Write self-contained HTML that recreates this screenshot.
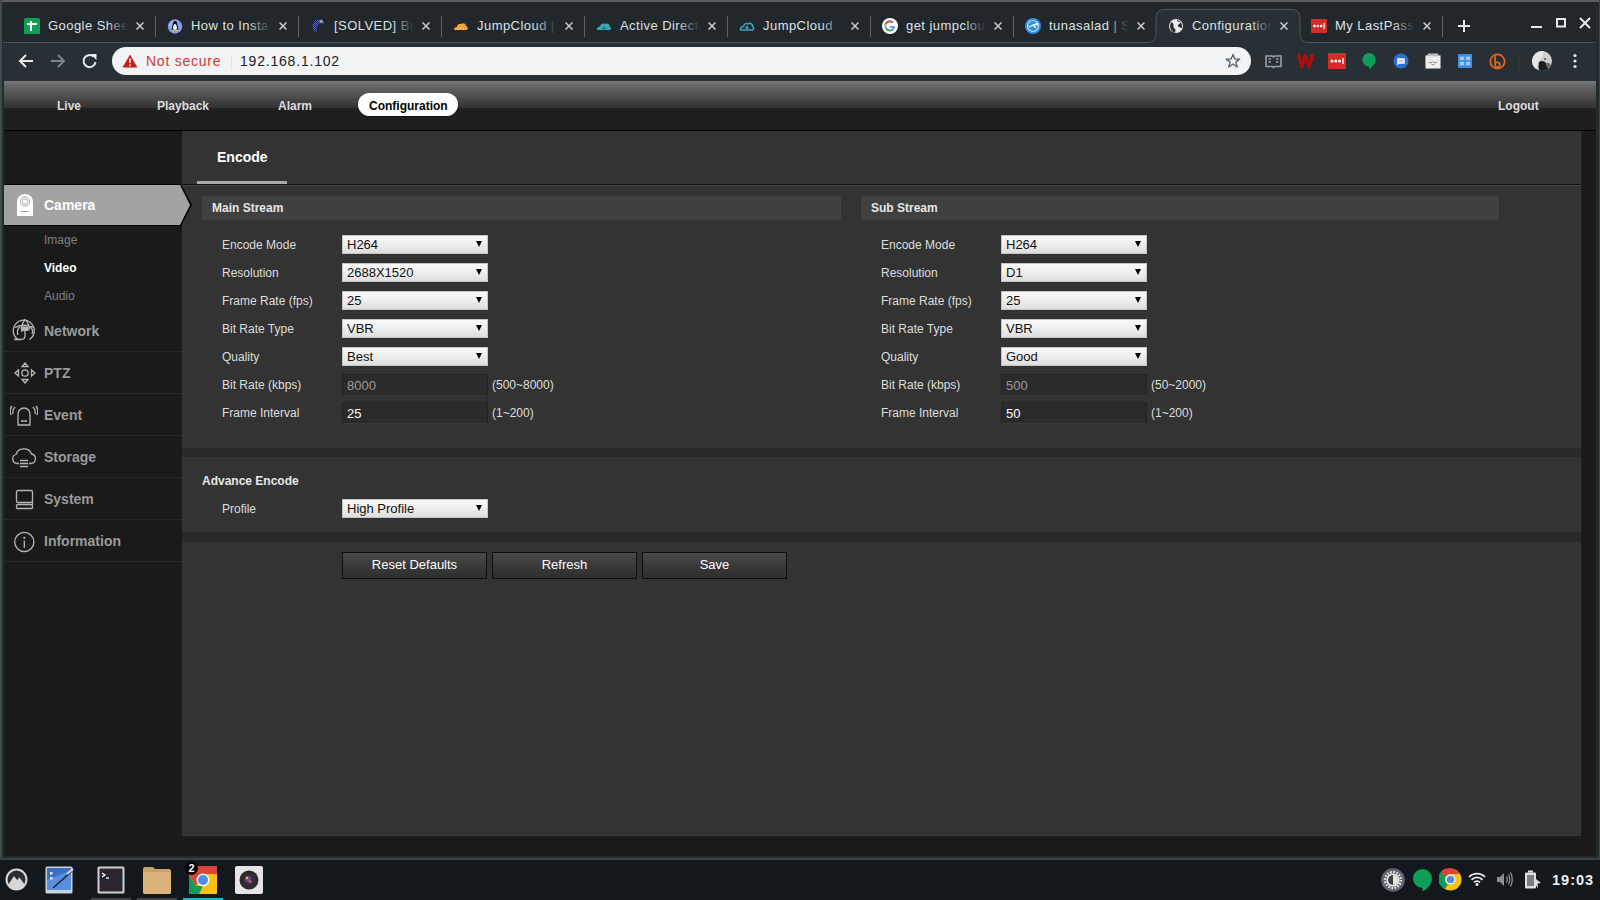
<!DOCTYPE html>
<html><head><meta charset="utf-8">
<style>
*{box-sizing:border-box;margin:0;padding:0}
html,body{width:1600px;height:900px;overflow:hidden;background:#13181c;font-family:"Liberation Sans",sans-serif}
.abs{position:absolute}
#win{position:absolute;left:0;top:0;width:1600px;height:860px;background:#232b2e}
#strip{position:absolute;left:3px;top:2px;width:1593px;height:40px;background:#21272b}
#toolbar{position:absolute;left:3px;top:43px;width:1593px;height:38px;background:#283035}
.sepline{position:absolute;top:42px;height:1px;background:#4a5357}
.tab{position:absolute;top:2px;height:40px;width:143px;color:#dde0e3;font-size:13px}
.tab .fav{position:absolute;left:12px;top:16px;width:16px;height:16px}
.tab .tt{position:absolute;left:36px;top:15px;width:80px;overflow:hidden;white-space:nowrap;line-height:18px;letter-spacing:0.45px}
.tab .tt:after{content:"";position:absolute;right:0;top:0;width:22px;height:18px;background:linear-gradient(90deg,rgba(33,39,43,0),#21272b)}
.tab.act .tt:after{background:linear-gradient(90deg,rgba(40,48,53,0),#283035)}
.tab .x{position:absolute;left:124px;top:20px;width:8px;height:8px}
.tab .sep{position:absolute;left:143px;top:14px;width:1px;height:21px;background:#5d6468}
#page{position:absolute;left:4px;top:81px;width:1592px;height:775px;background:#1b1b1b;overflow:hidden}
#nav{position:absolute;left:0;top:0;width:1592px;height:50px;background:linear-gradient(#787878 0px,#747474 2px,#6a6a6a 3px,#646464 5px,#5a5a5a 10px,#4c4c4c 16px,#3c3c3c 22px,#333 27px,#1f1f1f 27px,#222 29px,#1f1f1f 30px,#1f1f1f 49px,#000 49px)}
.navi{position:absolute;top:18px;font-size:12px;font-weight:bold;color:#ddd;line-height:14px}
#side{position:absolute;z-index:2;left:0;top:50px;width:178px;height:725px;background:#1a1a1a}
#panel{position:absolute;left:178px;top:50px;width:1399px;height:705px;background:#333;box-shadow:inset -1px -1px 0 #393939}
.lbl{position:absolute;font-size:12px;color:#ddd;line-height:14px}
.sel{position:absolute;width:146px;height:19px;background:linear-gradient(#fafafa,#ececec 55%,#dedede);border:1px solid #c4c4c4;font-size:13px;color:#111;line-height:17px;padding-left:4px}
.sel:after{content:"";position:absolute;right:5px;top:5px;border-left:3.5px solid transparent;border-right:3.5px solid transparent;border-top:6px solid #000}
.inp{position:absolute;width:146px;height:22px;background:#2b2b2b;border:1px solid #232323;border-bottom-color:#3a3a3a;font-size:13px;color:#fff;line-height:21px;padding-left:4px}
.btn{position:absolute;width:145px;height:27px;background:linear-gradient(#4a4a4a,#3a3a3a 50%,#2e2e2e);border:1px solid #0e0e0e;font-size:13px;color:#fff;text-align:center;line-height:24px}
.sb{position:absolute;left:0;width:178px;height:42px;border-bottom:1px solid #282828}
.sb span{position:absolute;left:40px;top:13px;font-size:14px;font-weight:bold;color:#9a9a9a;line-height:16px}
.sb svg{position:absolute}
.sub{position:absolute;left:40px;font-size:12px;color:#7f7f7f;line-height:14px}
#taskbar{position:absolute;left:0;top:860px;width:1600px;height:40px;background:#13181c}
</style></head>
<body>
<div id="win">
<div class="abs" style="left:0;top:0;width:1600px;height:2px;background:#585e62"></div>
<div class="abs" style="left:0;top:0;width:2px;height:860px;background:#414b4e"></div>
<div class="abs" style="left:1599px;top:0;width:1px;height:860px;background:#3a4447"></div>
<div class="abs" style="left:0;top:858px;width:1600px;height:2px;background:#3a4246"></div>
<div id="strip"></div><div id="toolbar"></div>
<div class="sepline" style="left:3px;width:1145px"></div>
<div class="sepline" style="left:1308px;width:288px"></div>
<svg class="abs" style="left:1146px;top:9px" width="164" height="34" viewBox="0 0 164 34"><path d="M1 33.5 Q10 33.5 10 25 V9 Q10 1 18 1 H146 Q154 1 154 9 V25 Q154 33.5 163 33.5 V34 H1Z" fill="#283035"/><path d="M1 33.5 Q10 33.5 10 25 V9 Q10 0.5 18 0.5 H146 Q154 0.5 154 9 V25 Q154 33.5 163 33.5" fill="none" stroke="#4d565a" stroke-width="1"/></svg>
<div class="tab" style="left:12px"><svg class="fav" viewBox="0 0 16 16"><rect x="0" y="0" width="16" height="16" rx="1.5" fill="#0f9d58"/><rect x="3" y="5" width="10" height="2" fill="#fff"/><rect x="6" y="3" width="2" height="10" fill="#fff"/></svg><div class="tt">Google Sheets</div><svg class="x" viewBox="0 0 8 8"><path d="M0.5 0.5L7.5 7.5M7.5 0.5L0.5 7.5" stroke="#c9ccd0" stroke-width="1.5"/></svg><div class="sep"></div></div>
<div class="tab" style="left:155px"><svg class="fav" viewBox="0 0 16 16"><circle cx="8" cy="8.5" r="7.2" fill="#7f9ef0"/><circle cx="6.5" cy="7" r="4" fill="#a8c0ff" opacity="0.6"/><path d="M8 3 C6.3 3 5.8 5 5.6 7 C5 9 4.3 10.5 4.8 12 H11.2 C11.7 10.5 11 9 10.4 7 C10.2 5 9.7 3 8 3Z" fill="#111"/><path d="M8 6 C6.8 6 6.3 8 6 10 C5.8 11 6.5 12 8 12 C9.5 12 10.2 11 10 10 C9.7 8 9.2 6 8 6Z" fill="#f4f4f4"/><path d="M4.3 12.5 Q5 10.8 6.8 12 Q8 13.2 6.5 13.3Z M11.7 12.5 Q11 10.8 9.2 12 Q8 13.2 9.5 13.3Z" fill="#d8d020"/></svg><div class="tt">How to Install</div><svg class="x" viewBox="0 0 8 8"><path d="M0.5 0.5L7.5 7.5M7.5 0.5L0.5 7.5" stroke="#c9ccd0" stroke-width="1.5"/></svg><div class="sep"></div></div>
<div class="tab" style="left:298px"><svg class="fav" viewBox="0 0 16 16"><defs><pattern id="ck" width="2" height="2" patternUnits="userSpaceOnUse"><rect width="2" height="2" fill="#5a5fc8"/><rect width="1" height="1" fill="#1c1f70"/><rect x="1" y="1" width="1" height="1" fill="#1c1f70"/></pattern></defs><path d="M6 2 C9 1 12 1.5 13 3 L15 5 L11 5.5 C9 5 7 7 7 10 L6.5 15 C4 13.5 2 11 2.5 7.5 C3 5 4 3 6 2Z" fill="url(#ck)"/><path d="M9 2.5 L12 1.5 L13.5 4.5 L10.5 5Z" fill="#9a9ec0"/></svg><div class="tt">[SOLVED] Bro</div><svg class="x" viewBox="0 0 8 8"><path d="M0.5 0.5L7.5 7.5M7.5 0.5L0.5 7.5" stroke="#c9ccd0" stroke-width="1.5"/></svg><div class="sep"></div></div>
<div class="tab" style="left:441px"><svg class="fav" viewBox="0 0 16 16"><path d="M1 12 C1 10 2 9 4 9 C4 7 6 5 8.5 6 C10 4.5 13 5.5 13 8 C15 8 15.5 12 13.5 12 Z" fill="#f5a13a"/><path d="M4 11h1M7 10h1M10 11h1" stroke="#fff" stroke-width="1"/></svg><div class="tt">JumpCloud | Di</div><svg class="x" viewBox="0 0 8 8"><path d="M0.5 0.5L7.5 7.5M7.5 0.5L0.5 7.5" stroke="#c9ccd0" stroke-width="1.5"/></svg><div class="sep"></div></div>
<div class="tab" style="left:584px"><svg class="fav" viewBox="0 0 16 16"><path d="M1 12 C1 10 2 8.5 4 8.5 C4.5 6 7 5 9 6 C11 4.5 14 6 13.5 8.5 C15.5 9 15.5 12 13.5 12 Z" fill="#3aa7b8"/><path d="M8 12 V9 M6.5 10.5 L8 9 L9.5 10.5" stroke="#1e5d66" stroke-width="1" fill="none"/></svg><div class="tt">Active Directo</div><svg class="x" viewBox="0 0 8 8"><path d="M0.5 0.5L7.5 7.5M7.5 0.5L0.5 7.5" stroke="#c9ccd0" stroke-width="1.5"/></svg><div class="sep"></div></div>
<div class="tab" style="left:727px"><svg class="fav" viewBox="0 0 16 16"><path d="M1.5 12 C1.5 10 2.5 8.5 4.5 8.5 C5 6 7 5 9 6 C11 4.5 14 6 13.5 8.5 C15 9 15 12 13.5 12 Z" fill="none" stroke="#3aa7b8" stroke-width="1.5"/><path d="M8 12 V8.5 M6.5 10 L8 8.5 L9.5 10" stroke="#3aa7b8" stroke-width="1.2" fill="none"/></svg><div class="tt">JumpCloud</div><svg class="x" viewBox="0 0 8 8"><path d="M0.5 0.5L7.5 7.5M7.5 0.5L0.5 7.5" stroke="#c9ccd0" stroke-width="1.5"/></svg><div class="sep"></div></div>
<div class="tab" style="left:870px"><svg class="fav" viewBox="0 0 16 16"><circle cx="8" cy="8" r="8" fill="#fff"/><path d="M12.8 8.2 H8 V9.8 H11 C10.6 11 9.5 11.8 8 11.8 A3.8 3.8 0 1 1 10.5 5.1 L11.6 4 A5.4 5.4 0 1 0 13 8.8 Z" fill="#4285f4"/><path d="M3.2 5.6 A5.4 5.4 0 0 1 11.6 4 L10.5 5.1 A3.8 3.8 0 0 0 4.6 6.5 Z" fill="#ea4335"/><path d="M3.2 5.6 L4.6 6.5 A3.8 3.8 0 0 0 4.6 9.5 L3.2 10.5 A5.4 5.4 0 0 1 3.2 5.6Z" fill="#fbbc05"/><path d="M3.2 10.5 L4.6 9.5 A3.8 3.8 0 0 0 10 11.2 L11.2 12.3 A5.4 5.4 0 0 1 3.2 10.5Z" fill="#34a853"/></svg><div class="tt">get jumpcloud</div><svg class="x" viewBox="0 0 8 8"><path d="M0.5 0.5L7.5 7.5M7.5 0.5L0.5 7.5" stroke="#c9ccd0" stroke-width="1.5"/></svg><div class="sep"></div></div>
<div class="tab" style="left:1013px"><svg class="fav" viewBox="0 0 16 16"><circle cx="8" cy="8" r="8" fill="#2f8fe0"/><circle cx="8" cy="8" r="5.5" fill="none" stroke="#bfe0ff" stroke-width="1.2"/><path d="M4 9 L8 7 L12 6 M8 7 L11 10" stroke="#fff" stroke-width="1.3"/><circle cx="12" cy="6" r="1.3" fill="#fff"/></svg><div class="tt">tunasalad | Sp</div><svg class="x" viewBox="0 0 8 8"><path d="M0.5 0.5L7.5 7.5M7.5 0.5L0.5 7.5" stroke="#c9ccd0" stroke-width="1.5"/></svg></div>
<div class="tab act" style="left:1156px"><svg class="fav" viewBox="0 0 16 16"><circle cx="8" cy="8" r="7" fill="#e8eaed"/><path d="M3 4 C5 5 6 6 5.5 8 C5 10 7 10 7.5 12 L7 15 C4 14 2 11 2 8 Z M9 1.5 C9 3 10 4 12 4 C13 5 11 6 10 7 C9 8 11 9 12 9.5 L14 10 C14.5 8 14 4 9 1.5Z" fill="#283035"/></svg><div class="tt">Configuration</div><svg class="x" viewBox="0 0 8 8"><path d="M0.5 0.5L7.5 7.5M7.5 0.5L0.5 7.5" stroke="#c9ccd0" stroke-width="1.5"/></svg></div>
<div class="tab" style="left:1299px"><svg class="fav" viewBox="0 0 16 16"><rect x="0" y="1" width="16" height="14" rx="1" fill="#d32d27"/><circle cx="3.5" cy="8" r="1.3" fill="#fff"/><circle cx="6.8" cy="8" r="1.3" fill="#fff"/><circle cx="10.1" cy="8" r="1.3" fill="#fff"/><rect x="12.5" y="5" width="1.2" height="6" fill="#fff"/></svg><div class="tt">My LastPass Va</div><svg class="x" viewBox="0 0 8 8"><path d="M0.5 0.5L7.5 7.5M7.5 0.5L0.5 7.5" stroke="#c9ccd0" stroke-width="1.5"/></svg><div class="sep"></div></div>
<svg class="abs" style="left:1457px;top:19px" width="14" height="14" viewBox="0 0 14 14"><path d="M7 1V13M1 7H13" stroke="#e8eaed" stroke-width="2"/></svg>
<svg class="abs" style="left:1530px;top:20px" width="14" height="14" viewBox="0 0 14 14"><path d="M1 7H12" stroke="#e8eaed" stroke-width="2"/></svg>
<svg class="abs" style="left:1556px;top:18px" width="11" height="10" viewBox="0 0 11 10"><rect x="1" y="1" width="8" height="7.5" fill="none" stroke="#e8eaed" stroke-width="2"/></svg>
<svg class="abs" style="left:1579px;top:17px" width="12" height="12" viewBox="0 0 12 12"><path d="M1 1L11 11M11 1L1 11" stroke="#e8eaed" stroke-width="2"/></svg>
<svg class="abs" style="left:17px;top:53px" width="18" height="16" viewBox="0 0 18 16"><path d="M16 8H3M9 2L3 8L9 14" stroke="#e8eaed" stroke-width="2" fill="none"/></svg>
<svg class="abs" style="left:49px;top:53px" width="18" height="16" viewBox="0 0 18 16"><path d="M2 8H15M9 2L15 8L9 14" stroke="#7f8589" stroke-width="2" fill="none"/></svg>
<svg class="abs" style="left:81px;top:53px" width="18" height="16" viewBox="0 0 18 16"><path d="M14.5 9 A6 6 0 1 1 12.5 3.6" stroke="#e8eaed" stroke-width="2" fill="none"/><path d="M9.5 1 H15.5 V7 Z" fill="#e8eaed"/></svg>
<div class="abs" style="left:112px;top:47px;width:1139px;height:28px;border-radius:14px;background:#f1f3f4"></div>
<svg class="abs" style="left:122px;top:54px" width="16" height="14" viewBox="0 0 16 14"><path d="M8 0.5L15.5 13.5H0.5Z" fill="#c5221f"/><path d="M8 4.5V9M8 10.5V12" stroke="#fff" stroke-width="1.6"/></svg>
<div class="abs" style="left:146px;top:53px;font-size:14px;letter-spacing:0.75px;color:#cf3a35;line-height:16px">Not secure</div>
<div class="abs" style="left:231px;top:54px;width:1px;height:15px;background:#e4e6e8"></div>
<div class="abs" style="left:240px;top:53px;font-size:14px;letter-spacing:0.8px;color:#202124;line-height:16px">192.168.1.102</div>
<svg class="abs" style="left:1225px;top:53px" width="16" height="16" viewBox="0 0 16 16"><path d="M8 1.5L9.9 6.1H14.7L10.8 9.1L12.3 14L8 11L3.7 14L5.2 9.1L1.3 6.1H6.1Z" fill="none" stroke="#5f6368" stroke-width="1.4" stroke-linejoin="round"/></svg>
<svg class="abs" style="left:1265px;top:55px" width="17" height="14" viewBox="0 0 17 14"><path d="M1 1H7.5L8.5 2L9.5 1H16V11.5H9.5L8.5 12.5L7.5 11.5H1Z" fill="none" stroke="#9aa0a4" stroke-width="1.6"/><path d="M3.5 4H6M3.5 7H6M11 4H13.5M11 7H13.5" stroke="#9aa0a4" stroke-width="1.4"/></svg>
<svg class="abs" style="left:1297px;top:54px" width="17" height="14" viewBox="0 0 17 14"><path d="M0 0H3.5L5 8L7 0H10L12 8L13.5 0H17L13.5 14H10.5L8.5 6L6.5 14H3.5Z" fill="#b00e0e"/><rect x="13" y="5" width="4" height="2" fill="#b00e0e"/></svg>
<svg class="abs" style="left:1328px;top:53px" width="18" height="16" viewBox="0 0 18 16"><rect x="0" y="0" width="18" height="16" rx="1" fill="#d32d27"/><circle cx="4" cy="8" r="1.5" fill="#fff"/><circle cx="7.8" cy="8" r="1.5" fill="#fff"/><circle cx="11.6" cy="8" r="1.5" fill="#fff"/><rect x="14.4" y="5" width="1.4" height="6" fill="#fff"/></svg>
<svg class="abs" style="left:1361px;top:52px" width="16" height="18" viewBox="0 0 17 20"><path d="M8.5 1A7.5 7.5 0 0 0 1 8.5A7.5 7.5 0 0 0 8.5 16V19C13 16 16 12 16 8.5A7.5 7.5 0 0 0 8.5 1Z" fill="#0f9d58"/></svg>
<svg class="abs" style="left:1393px;top:53px" width="16" height="16" viewBox="0 0 17 17"><circle cx="8.5" cy="8.5" r="8" fill="#2a6fd6"/><path d="M4.5 5.5H12.5V11.5H6.5L4.5 13Z" fill="#fff"/><rect x="6" y="7" width="5" height="3" fill="#c8c0f0"/></svg>
<svg class="abs" style="left:1425px;top:52px" width="16" height="18" viewBox="0 0 17 18"><rect x="0.5" y="3" width="16" height="14" fill="#eee"/><rect x="3" y="1" width="11" height="3" fill="#bbb"/><path d="M4 10 L6 11 L8 10 M9 10 L11 11 L13 10 M7 13 H10" stroke="#666" stroke-width="0.9" fill="none"/></svg>
<svg class="abs" style="left:1458px;top:54px" width="14" height="14" viewBox="0 0 16 16"><rect x="0" y="0" width="16" height="16" rx="1" fill="#3b8de0"/><rect x="2" y="3" width="12" height="4" fill="#9ccaf5"/><rect x="2" y="9" width="12" height="4" fill="#9ccaf5"/><rect x="7" y="3" width="2" height="10" fill="#3b8de0"/></svg>
<svg class="abs" style="left:1489px;top:53px" width="17" height="17" viewBox="0 0 18 18"><circle cx="9" cy="9" r="7.5" fill="none" stroke="#e8661c" stroke-width="1.8"/><path d="M6.5 3.5V12.5A2.5 2.5 0 1 0 9 10H6.5" stroke="#e8661c" stroke-width="1.8" fill="none"/></svg>
<div class="abs" style="left:1519px;top:52px;width:1px;height:18px;background:#2f373b"></div>
<svg class="abs" style="left:1532px;top:51px" width="20" height="20" viewBox="0 0 20 20"><defs><clipPath id="av"><circle cx="10" cy="10" r="10"/></clipPath></defs><g clip-path="url(#av)"><rect width="20" height="20" fill="#cfcfcf"/><path d="M0 0H12 L10 6 Q6 9 4 20 H0Z" fill="#e6e6e6"/><path d="M7 11 Q10 9 13 11 L15 14 Q17 17 15 20 H7 Q6 15 7 11Z" fill="#1e1e1e"/><path d="M14 12 Q17 11 19 14 V17 Q16 17 14 15Z" fill="#6a6a6a"/><circle cx="13" cy="8" r="0.9" fill="#444"/></g></svg>
<svg class="abs" style="left:1572px;top:53px" width="6" height="16" viewBox="0 0 6 16"><circle cx="3" cy="2.5" r="1.6" fill="#e8eaed"/><circle cx="3" cy="8" r="1.6" fill="#e8eaed"/><circle cx="3" cy="13.5" r="1.6" fill="#e8eaed"/></svg>
<div id="page">
<div id="nav">
<div class="navi" style="left:53px">Live</div>
<div class="navi" style="left:153px">Playback</div>
<div class="navi" style="left:274px">Alarm</div>
<div class="abs" style="left:354px;top:12px;width:100px;height:23px;border-radius:12px;background:#fff;box-shadow:0 1px 1px rgba(0,0,0,0.5)"></div>
<div class="navi" style="left:365px;color:#000">Configuration</div>
<div class="navi" style="left:1494px">Logout</div>
</div>
<div id="side">
<div class="abs" style="left:0;top:53px;width:188px;height:42px;background:#000;clip-path:polygon(0 0,177px 0,188px 21px,177px 42px,0 42px)"></div>
<div class="abs" style="left:0;top:54px;width:186px;height:40px;background:#a3a3a3;clip-path:polygon(0 0,176px 0,186px 20px,176px 40px,0 40px)"></div>
<svg class="abs" style="left:13px;top:63px" width="16" height="22" viewBox="0 0 16 22"><path d="M0 8 A8 8 0 0 1 16 8 V22 H0 Z" fill="#fff"/><circle cx="8" cy="7.5" r="4.5" fill="none" stroke="#a0a0a0" stroke-width="1"/><circle cx="8" cy="7.5" r="2.5" fill="none" stroke="#a0a0a0" stroke-width="0.8"/><line x1="4" y1="17.5" x2="12" y2="17.5" stroke="#a0a0a0" stroke-width="1"/></svg>
<div class="abs" style="left:40px;top:66px;font-size:14px;font-weight:bold;color:#fff;line-height:16px">Camera</div>
<div class="sub" style="top:102px">Image</div>
<div class="sub" style="top:130px;color:#fff;font-weight:bold">Video</div>
<div class="sub" style="top:158px">Audio</div>
<div class="sb" style="top:179px"><svg style="left:8px;top:8px" width="25" height="25" viewBox="0 0 25 25" fill="none" stroke="#b5b5b5" stroke-width="1.3"><path d="M6 21.5 A10.5 10.5 0 1 1 17.5 21.5"/><path d="M13 1.5 Q8 8 10 14M13 1.5 Q18 6 17 12M3 9.5 Q12 5 22 9.5M6 17 Q4 12 8 9M20 16 Q22 12 18 9"/><rect x="9.5" y="8.5" width="7" height="4.5" fill="#b5b5b5" stroke="none"/><path d="M13 13V17.5 Q13 21.5 9 21.5H2"/></svg><span>Network</span></div>
<div class="sb" style="top:221px"><svg style="left:10px;top:10px" width="22" height="22" viewBox="0 0 22 22" fill="none" stroke="#b5b5b5" stroke-width="1.3"><path d="M11 1L14 4.5H8Z M11 21L14 17.5H8Z M1 11L4.5 8V14Z M21 11L17.5 8V14Z"/><circle cx="11" cy="11" r="3.2"/><rect x="6.5" y="6.5" width="9" height="9" stroke="none"/></svg><span>PTZ</span></div>
<div class="sb" style="top:263px"><svg style="left:6px;top:9px" width="28" height="24" viewBox="0 0 28 24" fill="none" stroke="#b5b5b5" stroke-width="1.3"><path d="M8 22V11 A6 6 0 0 1 20 11 V22Z M11 18H17"/><path d="M5 4 Q2 7 3 11M2 3 Q-1 7 1 12M23 4 Q26 7 25 11M26 3 Q29 7 27 12"/></svg><span>Event</span></div>
<div class="sb" style="top:305px"><svg style="left:8px;top:10px" width="24" height="22" viewBox="0 0 24 22" fill="none" stroke="#b5b5b5" stroke-width="1.3"><path d="M7 17.5 H5 A4.6 4.6 0 0 1 4 8.5 A8 7 0 0 1 19.5 8 A4.8 4.8 0 0 1 19 17.5 H17"/><path d="M8 14.5H16M8 17.5H16M8 20.5H16"/></svg><span>Storage</span></div>
<div class="sb" style="top:347px"><svg style="left:11px;top:11px" width="22" height="22" viewBox="0 0 22 22" fill="none" stroke="#b5b5b5" stroke-width="1.3"><rect x="1.5" y="1.5" width="16" height="12" rx="1.5"/><path d="M17.5 12 V15.5 M2.5 15.5 H16 Q17.5 15.5 17.5 17 V18.5 Q17.5 19.5 16.5 19.5 H2.5 Q1.5 19.5 1.5 18.5 V16.5 Q1.5 15.5 2.5 15.5Z"/></svg><span>System</span></div>
<div class="sb" style="top:389px"><svg style="left:9px;top:11px" width="22" height="22" viewBox="0 0 22 22" fill="none" stroke="#b5b5b5" stroke-width="1.3"><circle cx="11.3" cy="11" r="9.6"/><path d="M11.3 9.5V17"/><circle cx="11.3" cy="6.8" r="0.5" fill="#b5b5b5"/></svg><span>Information</span></div>
</div>
<div id="panel">
<div class="abs" style="left:35px;top:18px;font-size:14px;font-weight:bold;color:#fff;line-height:16px">Encode</div>
<div class="abs" style="left:15px;top:50px;width:90px;height:3px;background:#aaa"></div>
<div class="abs" style="left:0;top:53px;width:1399px;height:1px;background:#111"></div>
<div class="abs" style="left:0;top:54px;width:1399px;height:1px;background:#474747"></div>
<div class="abs" style="left:20px;top:65px;width:639px;height:24px;background:#404040"></div>
<div class="abs" style="left:30px;top:70px;font-size:12px;font-weight:bold;color:#e6e6e6;line-height:14px">Main Stream</div>
<div class="abs" style="left:679px;top:65px;width:638px;height:24px;background:#404040"></div>
<div class="abs" style="left:689px;top:70px;font-size:12px;font-weight:bold;color:#e6e6e6;line-height:14px">Sub Stream</div>
<div class="lbl" style="left:40px;top:107px">Encode Mode</div>
<div class="sel" style="left:160px;top:104px">H264</div>
<div class="lbl" style="left:40px;top:135px">Resolution</div>
<div class="sel" style="left:160px;top:132px">2688X1520</div>
<div class="lbl" style="left:40px;top:163px">Frame Rate (fps)</div>
<div class="sel" style="left:160px;top:160px">25</div>
<div class="lbl" style="left:40px;top:191px">Bit Rate Type</div>
<div class="sel" style="left:160px;top:188px">VBR</div>
<div class="lbl" style="left:40px;top:219px">Quality</div>
<div class="sel" style="left:160px;top:216px">Best</div>
<div class="lbl" style="left:40px;top:247px">Bit Rate (kbps)</div>
<div class="inp" style="left:160px;top:243px;color:#999">8000</div>
<div class="lbl" style="left:310px;top:247px">(500~8000)</div>
<div class="lbl" style="left:40px;top:275px">Frame Interval</div>
<div class="inp" style="left:160px;top:271px">25</div>
<div class="lbl" style="left:310px;top:275px">(1~200)</div>
<div class="lbl" style="left:699px;top:107px">Encode Mode</div>
<div class="sel" style="left:819px;top:104px">H264</div>
<div class="lbl" style="left:699px;top:135px">Resolution</div>
<div class="sel" style="left:819px;top:132px">D1</div>
<div class="lbl" style="left:699px;top:163px">Frame Rate (fps)</div>
<div class="sel" style="left:819px;top:160px">25</div>
<div class="lbl" style="left:699px;top:191px">Bit Rate Type</div>
<div class="sel" style="left:819px;top:188px">VBR</div>
<div class="lbl" style="left:699px;top:219px">Quality</div>
<div class="sel" style="left:819px;top:216px">Good</div>
<div class="lbl" style="left:699px;top:247px">Bit Rate (kbps)</div>
<div class="inp" style="left:819px;top:243px;color:#999">500</div>
<div class="lbl" style="left:969px;top:247px">(50~2000)</div>
<div class="lbl" style="left:699px;top:275px">Frame Interval</div>
<div class="inp" style="left:819px;top:271px">50</div>
<div class="lbl" style="left:969px;top:275px">(1~200)</div>
<div class="abs" style="left:0;top:317px;width:1399px;height:9px;background:#292929"></div>
<div class="abs" style="left:20px;top:343px;font-size:12px;font-weight:bold;color:#e6e6e6;line-height:14px">Advance Encode</div>
<div class="lbl" style="left:40px;top:371px">Profile</div>
<div class="sel" style="left:160px;top:368px">High Profile</div>
<div class="abs" style="left:0;top:401px;width:1399px;height:10px;background:#292929"></div>
<div class="btn" style="left:160px;top:421px">Reset Defaults</div>
<div class="btn" style="left:310px;top:421px">Refresh</div>
<div class="btn" style="left:460px;top:421px">Save</div>
</div>
</div>
</div>
<div id="taskbar"></div>
<svg class="abs" style="left:5px;top:868px" width="23" height="23" viewBox="0 0 23 23"><circle cx="11.5" cy="11.5" r="10" fill="#2a2f33" stroke="#d8d8d8" stroke-width="2"/><path d="M3 17 L9 8 L12 12 L14.5 9.5 L20 17 A10 10 0 0 1 3 17Z" fill="#d8d8d8"/></svg>
<svg class="abs" style="left:45px;top:866px" width="29" height="28" viewBox="0 0 29 28"><rect x="0.5" y="0.5" width="27" height="27" rx="1.5" fill="#c8d2dc"/><rect x="2" y="2" width="24" height="22" fill="#3c6fc4"/><path d="M2 14 Q12 10 26 4 V24 H2Z" fill="#5a8ee0"/><rect x="5" y="6" width="2.5" height="2.5" fill="#e0e8f0"/><rect x="5" y="11" width="2.5" height="2.5" fill="#e0e8f0"/><path d="M8 22 L27 5" stroke="#222" stroke-width="1.5"/><path d="M22 8 L28 3" stroke="#ddd" stroke-width="2"/></svg>
<svg class="abs" style="left:97px;top:866px" width="28" height="28" viewBox="0 0 28 28"><rect x="0.5" y="0.5" width="27" height="27" rx="1.5" fill="#d0d0d0"/><rect x="2.5" y="2.5" width="23" height="23" fill="#2a2530"/><path d="M5 7 L8 9 L5 11" stroke="#fff" stroke-width="1.3" fill="none"/><path d="M9 12H12" stroke="#fff" stroke-width="1.3"/></svg>
<svg class="abs" style="left:143px;top:866px" width="28" height="28" viewBox="0 0 28 28"><path d="M0 3 Q0 1 2 1 H10 L12 3 H26 Q28 3 28 5 V26 Q28 28 26 28 H2 Q0 28 0 26Z" fill="#c9a26a"/><rect x="0" y="6" width="28" height="22" rx="2" fill="#dcb57c"/></svg>
<svg class="abs" style="left:189px;top:866px" width="28" height="28" viewBox="0 0 28 28"><rect x="0" y="0" width="28" height="28" rx="1" fill="#fbc116"/><path d="M0 0 H28 V8 H14 L7 20 L0 9Z" fill="#db4437"/><path d="M0 9 L7 20 L14 20 L10 28 H0Z" fill="#0f9d58"/><path d="M14 8 H28 V0 Z" fill="#db4437"/><circle cx="14" cy="14" r="6.5" fill="#fff"/><circle cx="14" cy="14" r="5" fill="#4a8fe0"/></svg>
<div class="abs" style="left:185px;top:862px;width:13px;height:13px;border-radius:7px;background:#000;color:#fff;font-size:11px;font-weight:bold;line-height:13px;text-align:center">2</div>
<svg class="abs" style="left:235px;top:866px" width="28" height="28" viewBox="0 0 28 28"><rect x="0" y="0" width="28" height="28" rx="2" fill="#e6e4e6"/><circle cx="14" cy="14" r="9.5" fill="#2b2b2b"/><circle cx="14" cy="14" r="6" fill="#3a2f3a"/><circle cx="13" cy="13" r="3" fill="#6a4a8a"/><circle cx="15" cy="15.5" r="1.5" fill="#c84a9a"/><circle cx="12" cy="12" r="1.2" fill="#e0c040"/></svg>
<div class="abs" style="left:91px;top:898px;width:40px;height:2px;background:#3c4246"></div>
<div class="abs" style="left:137px;top:898px;width:40px;height:2px;background:#3c4246"></div>
<div class="abs" style="left:183px;top:898px;width:40px;height:2px;background:#1bb9d0"></div>
<svg class="abs" style="left:1381px;top:868px" width="24" height="24" viewBox="0 0 24 24"><circle cx="12" cy="12" r="11.8" fill="#5f6670"/><circle cx="12" cy="12" r="8" fill="none" stroke="#e8e8e8" stroke-width="2.4" stroke-dasharray="1.6 1.54"/><circle cx="12" cy="12" r="6.6" fill="#e8e8e8"/><circle cx="12" cy="12" r="5" fill="#3a3f44"/><path d="M12 7 A5 5 0 0 1 12 17Z" fill="#e8e8d8"/></svg>
<svg class="abs" style="left:1412px;top:868px" width="21" height="24" viewBox="0 0 21 24"><path d="M10.5 1A9.5 9.5 0 0 0 1 10.5A9.5 9.5 0 0 0 10.5 20V23.5C16 20.5 20 16 20 10.5A9.5 9.5 0 0 0 10.5 1Z" fill="#0f9d58"/></svg>
<svg class="abs" style="left:1439px;top:868px" width="23" height="23" viewBox="0 0 24 24"><circle cx="12" cy="12" r="11.5" fill="#fbc116"/><path d="M12 0.5 A11.5 11.5 0 0 1 22 6.3 H12 A5.7 5.7 0 0 0 7 9 L2 3.8 A11.5 11.5 0 0 1 12 0.5Z" fill="#db4437"/><path d="M2 3.8 L7 9 A5.7 5.7 0 0 0 9.2 17 L6.3 22 A11.5 11.5 0 0 1 2 3.8Z" fill="#0f9d58"/><circle cx="12" cy="12" r="5.3" fill="#fff"/><circle cx="12" cy="12" r="4" fill="#4a8fe0"/></svg>
<svg class="abs" style="left:1468px;top:872px" width="18" height="14" viewBox="0 0 18 14"><path d="M1 5 A11 11 0 0 1 17 5M3.5 7.8 A7.5 7.5 0 0 1 14.5 7.8M6 10.5 A4 4 0 0 1 12 10.5" fill="none" stroke="#e8e8e8" stroke-width="1.8"/><circle cx="9" cy="12.5" r="1.5" fill="#e8e8e8"/></svg>
<svg class="abs" style="left:1496px;top:871px" width="18" height="17" viewBox="0 0 18 17"><path d="M1 6H4L8 2V15L4 11H1Z" fill="#8a8f93"/><path d="M10.5 5.5 Q12 8.5 10.5 11.5M12.5 3.5 Q15 8.5 12.5 13.5M14.5 1.5 Q18 8.5 14.5 15.5" stroke="#8a8f93" stroke-width="1.3" fill="none"/></svg>
<svg class="abs" style="left:1524px;top:870px" width="18" height="20" viewBox="0 0 18 20"><rect x="4" y="0.5" width="5" height="2" fill="#e0e0e0"/><rect x="1" y="2.5" width="11" height="16" rx="1" fill="#e0e0e0"/><rect x="3" y="5" width="7" height="11" fill="#7a7f83"/><path d="M12 9 L17 13 L13.5 13.5 L14 18 L10 13 L12 12.5Z" fill="#e0e0e0"/></svg>
<div class="abs" style="left:1552px;top:872px;font-size:14.5px;font-weight:bold;letter-spacing:1px;color:#eef0f2;line-height:16px">19:03</div>
</body></html>
